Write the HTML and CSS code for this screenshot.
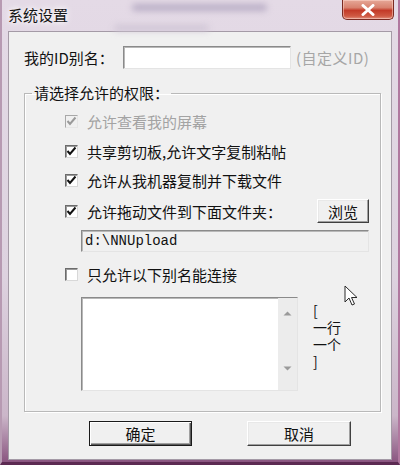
FILE: index.html
```html
<!DOCTYPE html>
<html lang="zh">
<head>
<meta charset="utf-8">
<title>系统设置</title>
<link rel="stylesheet" href="styles.css">
</head>
<body>
<div class="window">
  <div class="titlebar">
    <span class="title">系统设置</span>
    <div class="blur blur-a"></div>
    <div class="blur blur-b"></div>
    <button class="close" aria-label="关闭">
      <svg width="16" height="12" viewBox="0 0 16 12"><path d="M3 1.5 L13 10.5 M13 1.5 L3 10.5" stroke="#ffffff" stroke-width="3" stroke-linecap="round"/></svg>
    </button>
  </div>
  <div class="panel">
    <div class="id-row">
      <span class="id-label">我的ID别名：</span>
      <span class="field id-input"></span>
      <span class="hint">(自定义ID)</span>
    </div>
    <fieldset class="group">
      <legend class="legend">请选择允许的权限：</legend>
      <div class="group-body">
        <div class="row r1 disabled">
          <span class="cb checked"><svg width="11" height="11" viewBox="0 0 11 11"><path d="M1.5 5 L4 8 L9.5 1.5" fill="none" stroke="currentColor" stroke-width="2"/></svg></span>
          <span class="cb-text">允许查看我的屏幕</span>
        </div>
        <div class="row r2">
          <span class="cb checked"><svg width="11" height="11" viewBox="0 0 11 11"><path d="M1.5 5 L4 8 L9.5 1.5" fill="none" stroke="currentColor" stroke-width="2"/></svg></span>
          <span class="cb-text">共享剪切板,允许文字复制粘帖</span>
        </div>
        <div class="row r3">
          <span class="cb checked"><svg width="11" height="11" viewBox="0 0 11 11"><path d="M1.5 5 L4 8 L9.5 1.5" fill="none" stroke="currentColor" stroke-width="2"/></svg></span>
          <span class="cb-text">允许从我机器复制并下载文件</span>
        </div>
        <div class="row r4">
          <span class="cb checked"><svg width="11" height="11" viewBox="0 0 11 11"><path d="M1.5 5 L4 8 L9.5 1.5" fill="none" stroke="currentColor" stroke-width="2"/></svg></span>
          <span class="cb-text">允许拖动文件到下面文件夹：</span>
          <button class="btn browse">浏览</button>
        </div>
        <div class="field path">d:\NNUpload</div>
        <div class="row r5">
          <span class="cb"></span>
          <span class="cb-text">只允许以下别名能连接</span>
        </div>
        <div class="list-row">
          <div class="field listbox">
            <div class="list-area"></div>
            <div class="scrollbar">
              <svg width="9" height="5" viewBox="0 0 9 5"><path d="M0.5 4.5 L4.5 0.5 L8.5 4.5 Z" fill="#9a9a9a"/></svg>
              <svg width="9" height="5" viewBox="0 0 9 5"><path d="M0.5 0.5 L4.5 4.5 L8.5 0.5 Z" fill="#9a9a9a"/></svg>
            </div>
          </div>
          <div class="note">[<br>一行<br>一个<br>]</div>
        </div>
      </div>
    </fieldset>
    <div class="actions">
      <button class="btn ok">确定</button>
      <button class="btn cancel">取消</button>
    </div>
  </div>
  <svg class="cursor" width="14" height="22" viewBox="0 0 14 22"><path d="M1 1 L1 17 L5 13 L8 20 L10.5 19 L7.5 12.5 L13 12.5 Z" fill="#ffffff" stroke="#2a2a2a" stroke-width="1" stroke-linejoin="round"/></svg>
</div>
</body>
</html>
```

FILE: styles.css
```css
* { box-sizing: border-box; }
html, body { margin: 0; padding: 0; }
body {
  width: 400px;
  height: 465px;
  overflow: hidden;
  font-family: "Noto Sans CJK SC", "Noto Sans", sans-serif;
  font-size: 15px;
  color: #111;
}
.window {
  position: relative;
  width: 400px;
  height: 465px;
  display: flex;
  flex-direction: column;
  background: linear-gradient(180deg, #e4dae6 0%, #ddd2df 60%, #cbb6c9 90%, #8a5580 100%);
  border-left: 2px solid #b79ab2;
  border-right: 2px solid #b0789f;
  border-bottom: 3px solid #5c2a52;
}
.titlebar {
  position: relative;
  height: 31px;
  flex: none;
  display: flex;
  align-items: flex-start;
  padding-left: 6px;
}
.title {
  line-height: 30px;
  font-size: 15px;
  color: #151515;
  text-shadow: 0 0 5px #ffffff, 0 0 8px #ffffff;
  position: relative;
  z-index: 1;
}
.blur {
  position: absolute;
  border-radius: 8px;
  filter: blur(3px);
}
.blur-a { left: 130px; top: 4px; width: 135px; height: 7px; background: #b9aec6; }
.blur-b { left: 112px; top: 25px; width: 95px; height: 6px; background: #cfc5d5; }
.close {
  position: absolute;
  right: 4px;
  top: 0;
  width: 52px;
  height: 20px;
  padding: 0;
  border: 1px solid #7a2b22;
  border-top: none;
  border-radius: 0 0 5px 5px;
  background: linear-gradient(180deg, #e6a898 0%, #d8826f 40%, #c33a28 55%, #cf5a43 85%, #e29180 100%);
  box-shadow: inset 0 0 0 1px rgba(255, 220, 210, 0.5);
  display: flex;
  align-items: center;
  justify-content: center;
}
.panel {
  flex: 1;
  margin: 0 6px 2px 6px;
  background: #f0f0f0;
  border: 1px solid #a49aa6;
  padding: 14px 0 0 15px;
  display: flex;
  flex-direction: column;
}
.id-row {
  display: flex;
  align-items: center;
  height: 23px;
}
.id-label {
  width: 99px;
  flex: none;
}
.field {
  background: #ffffff;
  border: 1px solid;
  border-color: #8a8a8a #e4e4e4 #e4e4e4 #8a8a8a;
  box-shadow: inset 1px 1px 0 #b8b8b8;
}
.id-input {
  width: 168px;
  height: 23px;
}
.hint {
  margin-left: 5px;
  color: #a6a6a6;
  letter-spacing: 0.5px;
}
.group {
  margin: 14px 0 0 0;
  padding: 0;
  width: 357px;
  border: 1px solid #b9b9b9;
  box-shadow: 1px 1px 0 #ffffff, inset 1px 1px 0 #ffffff;
  min-width: 0;
}
.legend {
  margin-left: 7px;
  padding: 0 2px;
  line-height: 20px;
  height: 20px;
}
.group-body {
  padding: 7px 11px 20px 40px;
  display: flex;
  flex-direction: column;
}
.row {
  display: flex;
  align-items: center;
  height: 22px;
}
.r2 { margin-top: 8px; }
.r3 { margin-top: 7px; }
.r4 { margin-top: 8px; height: 24px; }
.r5 { margin-top: 11px; }
.cb {
  width: 13px;
  height: 13px;
  flex: none;
  background: #ffffff;
  border: 1px solid;
  border-color: #6c6c6c #d8d8d8 #d8d8d8 #6c6c6c;
  box-shadow: inset 1px 1px 0 #9a9a9a;
  display: flex;
  align-items: center;
  justify-content: center;
  color: #111;
}
.cb-text { margin-left: 9px; white-space: nowrap; }
.disabled .cb { color: #9a9a9a; background: #f0f0f0; border-color: #a8a8a8 #e6e6e6 #e6e6e6 #a8a8a8; box-shadow: none; }
.disabled .cb-text { color: #a3a3a3; }
.btn {
  font-family: inherit;
  font-size: 15px;
  color: #111;
  background: #f0f0f0;
  padding: 0;
  border: 1px solid;
  border-color: #ffffff #404040 #404040 #ffffff;
  box-shadow: inset -1px -1px 0 #a0a0a0, inset 1px 1px 0 #e8e8e8;
  display: flex;
  align-items: center;
  justify-content: center;
}
.browse {
  margin-left: auto;
  width: 52px;
  height: 24px;
}
.path {
  margin: 7px 0 0 16px;
  height: 22px;
  background: #f0f0f0;
  font-family: "Liberation Mono", "DejaVu Sans Mono", monospace;
  font-size: 14px;
  line-height: 20px;
  padding-left: 3px;
  color: #111;
}
.list-row {
  margin: 12px 0 0 16px;
  display: flex;
  align-items: flex-start;
}
.listbox {
  width: 217px;
  height: 94px;
  display: flex;
}
.list-area { flex: 1; }
.scrollbar {
  width: 19px;
  background: #ececec;
  display: flex;
  flex-direction: column;
  justify-content: space-between;
  align-items: center;
  padding: 13px 0 19px 0;
}
.note {
  margin-left: 15px;
  margin-top: 5px;
  line-height: 17px;
  font-size: 14px;
}
.actions {
  display: flex;
  margin-top: 9px;
  padding-left: 65px;
}
.ok {
  width: 103px;
  height: 25px;
  border: 1px solid #1a1a1a;
  box-shadow: inset 1px 1px 0 #ffffff, inset -1px -1px 0 #5a5a5a, inset -2px -2px 0 #a0a0a0;
}
.cancel {
  margin-left: 55px;
  width: 104px;
  height: 25px;
}
.cursor {
  position: absolute;
  left: 342px;
  top: 285px;
}
```
